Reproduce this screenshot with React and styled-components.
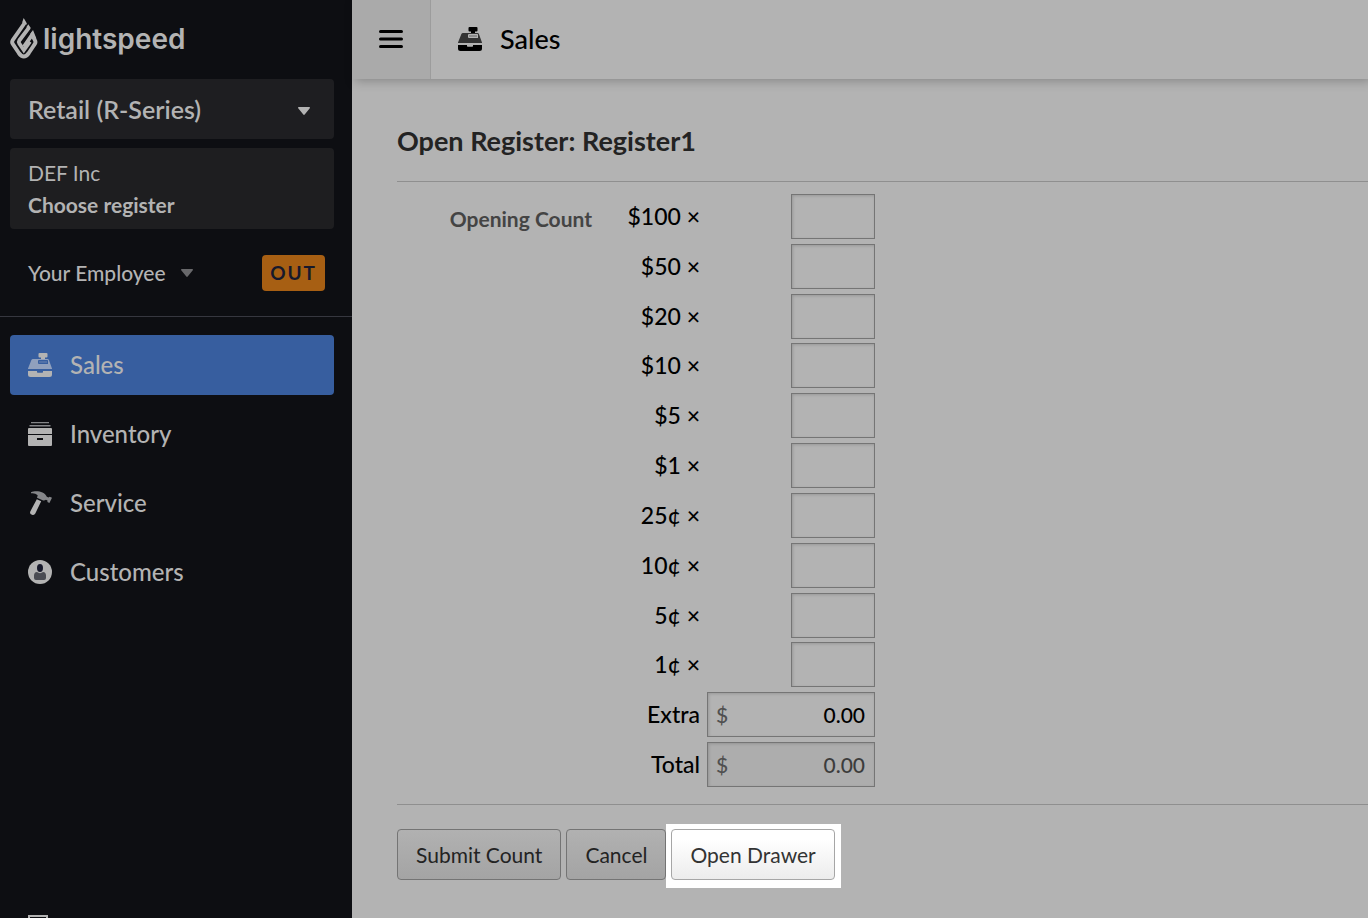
import React from "react";
import styled, { createGlobalStyle } from "styled-components";

const DENOMINATIONS = [
  { id: "hundred", label: "$100 ×" },
  { id: "fifty", label: "$50 ×" },
  { id: "twenty", label: "$20 ×" },
  { id: "ten", label: "$10 ×" },
  { id: "five", label: "$5 ×" },
  { id: "one", label: "$1 ×" },
  { id: "quarter", label: "25¢ ×" },
  { id: "dime", label: "10¢ ×" },
  { id: "nickel", label: "5¢ ×" },
  { id: "penny", label: "1¢ ×" },
];

const RegisterIcon = ({ shade, screen }) => (
  <svg width="24" height="24" viewBox="0 0 24 24" aria-hidden="true">
    <path
      fill="currentColor"
      d="M11.500 0h7a1 1 0 0 1 1 1v2.500a1 1 0 0 1-1 1H17V6h-4V4.500h-1.500a1 1 0 0 1-1-1V1a1 1 0 0 1 1-1z"
    />
    <path
      fill={shade}
      d="M5 6h14.500a1.500 1.500 0 0 1 1.400 1L24 15.500V16H0v-.5L3.400 7A1.700 1.700 0 0 1 5 6z"
    />
    <path fill={screen} d="M11 7h8.500a.5.5 0 0 1 .5.5V11h-9a1 1 0 0 1-1-1V8a1 1 0 0 1 1-1z" />
    <path fill={shade} d="M11 8h8v2h-8z" opacity="0.3" />
    <path
      fill="currentColor"
      d="M0 18h9v1a.7.7 0 0 0 .7.7h4.600A.7.7 0 0 0 15 19v-1h9v3.500a2.500 2.500 0 0 1-2.500 2.500h-19A2.500 2.500 0 0 1 0 21.500z"
    />
  </svg>
);

const InventoryIcon = () => (
  <svg width="24" height="24" viewBox="0 0 24 24" aria-hidden="true">
    <path fill="#858689" d="M3 0h18v1.300H3zM1.500 3h21v1.400h-21z" />
    <path
      fill="currentColor"
      d="M1 6h22a1 1 0 0 1 1 1v5H0V7a1 1 0 0 1 1-1zM0 13h24v10a1 1 0 0 1-1 1H1a1 1 0 0 1-1-1z"
    />
    <path fill="#0d0e12" d="M9 16h6v2H9z" />
  </svg>
);

const ServiceIcon = () => (
  <svg width="24" height="24" viewBox="0 0 24 24" aria-hidden="true">
    <path
      fill="#858689"
      d="M3 1.200C6-.2 11-.2 14.500 1.400c2 .9 3.500 2.200 4.300 4.400l1.700.7 1.200-.8 2.300 1-2.600 5.400-2-1 .1-1.600-1.600-.7c-1 .8-2.100 1-3.300.5L9 6.700l.7-2.500C7.800 2.500 5.500 1.800 3 2.300z"
    />
    <path
      fill="currentColor"
      d="M8.800 8.200l4.400 2-5.900 12.300a2.600 2.600 0 0 1-3.300 1.200 2.500 2.500 0 0 1-1.700-3.300z"
    />
  </svg>
);

const CustomerIcon = () => (
  <svg width="24" height="24" viewBox="0 0 24 24" aria-hidden="true">
    <circle cx="12" cy="12" r="12" fill="currentColor" />
    <ellipse cx="12" cy="8" rx="3" ry="4" fill="#17192b" />
    <path
      fill="#4a4c53"
      d="M9 12c1.700 1.500 4.300 1.500 6 0 2 .2 3 1.500 3 3.500V18a2 2 0 0 1-2 2H8a2 2 0 0 1-2-2v-2.500c0-2 1-3.300 3-3.500z"
    />
  </svg>
);

const FlameMark = () => (
  <svg width="28" height="41" viewBox="0 0 28 41" aria-hidden="true">
    <g fill="none" stroke="currentColor" strokeWidth="3.900">
      <path d="M14.300 5.500 L2.900 21.800 Q1.400 24 2.900 26.200 L8.800 35 Q13.800 42 18.800 35 L24.700 26.200 Q26.200 24 24.700 21.800 L22 17 L14 28.500" />
      <path d="M18.800 9.800 L9.300 22.500 Q8.300 24 9.300 25.500 L13.800 32 L19.900 23.500" />
    </g>
    <path
      fill="currentColor"
      d="M13.700 0l3.200 5.500-.8 1.400-4-2.500zM18.300 6.300l2.500 3.700-1 1.500-3.500-2.200zM23 12l3.400 8.500-3-1-3.200-3.500z"
    />
  </svg>
);

const Caret = () => (
  <svg width="12" height="8" viewBox="0 0 12 8" aria-hidden="true">
    <path fill="currentColor" d="M.8 0h10.400c.8 0 1 .6.6 1.200L6.700 7.500a.9.9 0 0 1-1.400 0L.2 1.200C-.2.600 0 0 .8 0z" />
  </svg>
);

const NAV = [
  {
    label: "Sales",
    icon: <RegisterIcon shade="#90a0bd" screen="#375e9f" />,
    active: true,
  },
  { label: "Inventory", icon: <InventoryIcon /> },
  { label: "Service", icon: <ServiceIcon /> },
  { label: "Customers", icon: <CustomerIcon /> },
];

const Sidebar = () => {
  return (
    <Aside>
      <Brand href="#">
        <FlameMark />
        <span>lightspeed</span>
      </Brand>
      <ProductPicker>
        <ProductSelect aria-label="Product">
          <option>Retail (R-Series)</option>
        </ProductSelect>
        <Caret />
      </ProductPicker>
      <ShopButton type="button">
        <span>DEF Inc</span>
        <strong>Choose register</strong>
      </ShopButton>
      <EmployeeRow>
        <EmployeeButton type="button">
          Your Employee
          <Caret />
        </EmployeeButton>
        <ClockButton type="button">OUT</ClockButton>
      </EmployeeRow>
      <Nav>
        {NAV.map((item) => (
          <NavLink href="#" key={item.label} $active={item.active}>
            {item.icon}
            {item.label}
          </NavLink>
        ))}
      </Nav>
      <HelpLink href="#" aria-label="Help">
        <svg width="20" height="24" viewBox="0 0 20 24" aria-hidden="true">
          <rect x="1" y="1" width="18" height="22" fill="none" stroke="currentColor" strokeWidth="2" />
        </svg>
      </HelpLink>
    </Aside>
  );
};

const CountForm = () => {
  return (
    <Form onSubmit={(e) => e.preventDefault()}>
      <Title>Open Register: Register1</Title>
      <CountSection>
        <SectionLabel id="opening-count">Opening Count</SectionLabel>
        <CountGrid role="group" aria-labelledby="opening-count">
          {DENOMINATIONS.map((d) => (
            <CountRow key={d.id}>
              <label htmlFor={d.id}>{d.label}</label>
              <CountInput id={d.id} type="text" />
            </CountRow>
          ))}
          <CountRow>
            <label htmlFor="extra">Extra</label>
            <MoneyField>
              <span>$</span>
              <MoneyInput id="extra" type="text" defaultValue="0.00" />
            </MoneyField>
          </CountRow>
          <CountRow>
            <label htmlFor="total">Total</label>
            <MoneyField $disabled>
              <span>$</span>
              <MoneyInput id="total" type="text" value="0.00" readOnly />
            </MoneyField>
          </CountRow>
        </CountGrid>
      </CountSection>
      <Actions>
        <Button type="submit">Submit Count</Button>
        <Button type="button">Cancel</Button>
        <Spotlight>
          <Button type="button" $bright>
            Open Drawer
          </Button>
        </Spotlight>
      </Actions>
    </Form>
  );
};

const App = () => {
  return (
    <>
      <GlobalStyle />
      <Layout>
        <Sidebar />
        <Main>
          <Header>
            <MenuButton type="button" aria-label="Menu">
              <svg width="24" height="18" viewBox="0 0 24 18" aria-hidden="true">
                <path
                  d="M1.500 1.500h21M1.500 9h21M1.500 16.500h21"
                  stroke="currentColor"
                  strokeWidth="3"
                  strokeLinecap="round"
                />
              </svg>
            </MenuButton>
            <PageName>
              <RegisterIcon shade="#333333" screen="#b3b3b3" />
              Sales
            </PageName>
          </Header>
          <CountForm />
        </Main>
      </Layout>
    </>
  );
};

export default App;

const GlobalStyle = createGlobalStyle`
  * {
    box-sizing: border-box;
  }
  body {
    margin: 0;
    background-color: #b3b3b3;
    font-family: Lato, "Liberation Sans", sans-serif;
    font-size: 24px;
    color: #000;
  }
  button, input, select {
    font: inherit;
    color: inherit;
  }
  svg {
    display: block;
    flex: none;
  }
`;

const Layout = styled.div`
  display: flex;
  height: 100vh;
  overflow: hidden;
`;

//sidebar
const Aside = styled.aside`
  display: flex;
  flex-direction: column;
  flex: none;
  width: 352px;
  overflow: hidden;
  background-color: #0d0e12;
  color: #b3b3b3;
`;
const Brand = styled.a`
  display: flex;
  align-items: center;
  gap: 5px;
  height: 79px;
  padding: 0 10px 2px;
  color: inherit;
  text-decoration: none;
  font-family: Inter, "Liberation Sans", sans-serif;
  font-size: 28px;
  font-weight: 600;
`;
const ProductPicker = styled.div`
  position: relative;
  margin: 0 18px 0 10px;
  svg {
    position: absolute;
    top: 28px;
    right: 24px;
    pointer-events: none;
  }
`;
const ProductSelect = styled.select`
  display: block;
  width: 100%;
  height: 60px;
  padding: 0 48px 0 18px;
  border: 0;
  border-radius: 4px;
  appearance: none;
  background-color: #1e1e21;
  font-size: 25px;
  font-weight: 600;
`;
const ShopButton = styled.button`
  display: flex;
  flex-direction: column;
  margin: 9px 18px 0 10px;
  padding: 9px 18px 8px;
  border: 0;
  border-radius: 4px;
  background-color: #1e1e20;
  font-size: 21px;
  line-height: 32px;
  text-align: left;
`;
const EmployeeRow = styled.div`
  display: flex;
  align-items: center;
  justify-content: space-between;
  padding: 26px 27px 25px 28px;
  border-bottom: 1px solid #36373f;
`;
const EmployeeButton = styled.button`
  display: flex;
  align-items: center;
  gap: 15px;
  padding: 0;
  border: 0;
  background: none;
  font-size: 21px;
  font-weight: 500;
  line-height: 36px;
  svg {
    color: #68686b;
  }
`;
const ClockButton = styled.button`
  height: 36px;
  padding: 0 8px 1px;
  border: 0;
  border-radius: 4px;
  background-color: #a75f13;
  color: #17192b;
  font-size: 19px;
  font-weight: 700;
  letter-spacing: 2px;
`;
const Nav = styled.nav`
  display: flex;
  flex-direction: column;
  flex: 1;
  gap: 9px;
  padding: 18px 18px 0 10px;
`;
const NavLink = styled.a`
  display: flex;
  align-items: center;
  gap: 18px;
  height: 60px;
  padding: 0 18px;
  border-radius: 4px;
  background-color: ${(props) => (props.$active ? "#375e9f" : "transparent")};
  color: inherit;
  font-weight: 500;
  line-height: 28px;
  text-decoration: none;
`;
/* sits on the lower edge, the rest is cut off */
const HelpLink = styled.a`
  height: 24px;
  margin: 0 28px -21px;
  color: inherit;
`;

//main
const Main = styled.main`
  flex: 1;
  min-width: 0;
`;
const Header = styled.header`
  display: flex;
  height: 79px;
  box-shadow: 3px 2px 10px rgba(0, 0, 0, 0.25);
`;
const MenuButton = styled.button`
  display: flex;
  align-items: center;
  justify-content: center;
  width: 79px;
  padding: 0 0 1px;
  border: 0;
  border-right: 1px solid #9c9c9c;
  background-color: #aaaaaa;
`;
const PageName = styled.div`
  display: flex;
  align-items: center;
  gap: 18px;
  padding: 0 0 1px 27px;
  font-size: 27px;
  font-weight: 500;
  line-height: 32px;
`;
const Form = styled.form`
  padding-left: 45px;
`;
const Title = styled.h1`
  margin: 0;
  padding: 44px 0 22px;
  border-bottom: 1px solid #8f8f8f;
  color: #232323;
  font-size: 27px;
  font-weight: 700;
  line-height: 36px;
`;
const CountSection = styled.div`
  display: flex;
  padding-top: 12px;
  border-bottom: 1px solid #8f8f8f;
`;
const SectionLabel = styled.h2`
  width: 195px;
  margin: 0;
  padding-top: 3px;
  color: #444444;
  font-size: 21px;
  font-weight: 700;
  line-height: 44px;
  text-align: right;
`;
const CountGrid = styled.div`
  display: grid;
  grid-auto-rows: 1fr;
  min-height: 598px;
  margin-bottom: 12px;
`;
const CountRow = styled.div`
  display: grid;
  grid-template-columns: 108px 168px;
  column-gap: 7px;
  align-items: start;
  label {
    font-size: 23px;
    font-weight: 500;
    line-height: 45px;
    text-align: right;
  }
`;
const CountInput = styled.input`
  justify-self: end;
  width: 84px;
  height: 45px;
  padding: 0 9px;
  border: 1px solid #757575;
  border-radius: 0;
  background-color: #b3b3b3;
  box-shadow: inset 1px 1px 3px rgba(0, 0, 0, 0.15);
  font-size: 21px;
  text-align: right;
`;
const MoneyField = styled.div`
  display: flex;
  align-items: center;
  height: 45px;
  padding: 0 9px 0 8px;
  border: 1px solid #757575;
  background-color: ${(props) => (props.$disabled ? "#adadad" : "#b3b3b3")};
  box-shadow: inset 1px 1px 3px rgba(0, 0, 0, 0.15);
  color: ${(props) => (props.$disabled ? "#3c3c3c" : "#000")};
  font-size: 21px;
  font-weight: 500;
  span {
    color: #505050;
  }
`;
const MoneyInput = styled.input`
  flex: 1;
  min-width: 0;
  padding: 0;
  border: 0;
  background: none;
  text-align: right;
`;
const Actions = styled.div`
  display: flex;
  align-items: flex-start;
  padding-top: 24px;
`;
const Button = styled.button`
  height: 51px;
  margin-right: ${(props) => (props.$bright ? "0" : "5px")};
  padding: 0 18px;
  border: 1px solid ${(props) => (props.$bright ? "#a6a6a6" : "#747474")};
  border-radius: 4px;
  background: ${(props) =>
    props.$bright
      ? "linear-gradient(#ffffff 20%, #ececec)"
      : "linear-gradient(#b1b1b1, #a4a4a4)"};
  color: ${(props) => (props.$bright ? "#333333" : "#232323")};
  font-size: 21px;
  white-space: nowrap;
`;
const Spotlight = styled.div`
  margin: -5px 0 0 -5px;
  padding: 5px 6px 8px 5px;
  background-color: #fff;
`;
